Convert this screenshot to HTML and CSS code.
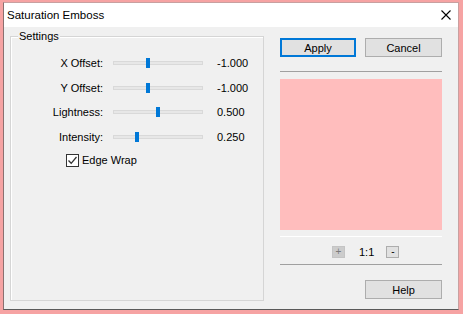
FILE: index.html
```html
<!DOCTYPE html>
<html>
<head>
<meta charset="utf-8">
<link rel="stylesheet" href="styles.css">
</head>
<body>
<div class="window">
  <div class="titlebar">
    <span class="title">Saturation Emboss</span>
    <svg class="close" width="10" height="10" viewBox="0 0 10 10"><path d="M0.5 0.5L9.5 9.5M9.5 0.5L0.5 9.5" stroke="#000" stroke-width="1.1" fill="none"/></svg>
  </div>
  <div class="content">
    <div class="group">
      <span class="legend">Settings</span>
      <div class="rows">
        <span class="label">X Offset:</span>
        <div class="track"><span class="thumb" style="left:32px"></span></div>
        <span class="value">-1.000</span>

        <span class="label">Y Offset:</span>
        <div class="track"><span class="thumb" style="left:32px"></span></div>
        <span class="value">-1.000</span>

        <span class="label">Lightness:</span>
        <div class="track"><span class="thumb" style="left:42px"></span></div>
        <span class="value">0.500</span>

        <span class="label">Intensity:</span>
        <div class="track"><span class="thumb" style="left:21px"></span></div>
        <span class="value">0.250</span>
      </div>
      <div class="check">
        <span class="box"><svg width="11" height="11" viewBox="0 0 11 11"><path d="M1.5 5.5L4.2 8.3L9.5 2" stroke="#333" stroke-width="1.3" fill="none"/></svg></span>
        <span>Edge Wrap</span>
      </div>
    </div>
    <div class="side">
      <div class="btnrow">
        <div class="btn default">Apply</div>
        <div class="btn cancel">Cancel</div>
      </div>
      <div class="sep grey first"></div>
      <div class="preview"></div>
      <div class="sep white"></div>
      <div class="zoomrow">
        <div class="zbtn plus">+</div>
        <span class="ratio">1:1</span>
        <div class="zbtn minus">-</div>
      </div>
      <div class="sep grey second"></div>
      <div class="btn help">Help</div>
    </div>
  </div>
</div>
</body>
</html>
```

FILE: styles.css
```css
* { box-sizing: border-box; }
html, body { margin: 0; padding: 0; }
body {
  width: 463px;
  height: 314px;
  background: #f6a3a3;
  padding: 2px 0 0 3px;
  font-family: "Liberation Sans", Arial, sans-serif;
  font-size: 11px;
  color: #000;
  overflow: hidden;
}
.window {
  width: 456px;
  height: 308px;
  background: #f0f0f0;
  border: 1px solid #c8a0a0;
  border-bottom-color: #5a5a5a;
  border-left-color: #8a7070;
  display: flex;
  flex-direction: column;
}
.titlebar {
  height: 24px;
  background: #fff;
  display: flex;
  align-items: center;
  justify-content: space-between;
  padding: 0 7px 0 3px;
}
.title { font-size: 11.5px; }
.close { display: block; }
.content {
  display: flex;
  padding: 9px 0 0 6px;
}
.group {
  position: relative;
  width: 254px;
  height: 265px;
  border: 1px solid #d5d5d5;
  box-shadow: inset 1px 1px 0 #fff;
}
.legend {
  position: absolute;
  left: 7px;
  top: -8px;
  padding: 0 1px;
  background: #f0f0f0;
  line-height: 14px;
}
.rows {
  display: grid;
  grid-template-columns: 92px 100px auto;
  grid-template-rows: 24px 25px 24px 25px;
  align-items: center;
  padding-top: 14px;
}
.label { text-align: right; }
.track {
  position: relative;
  margin-left: 10px;
  height: 4px;
  background: #e7e7e7;
  border: 1px solid #d9d9d9;
}
.thumb {
  position: absolute;
  top: -4px;
  width: 4px;
  height: 10px;
  background: #0078d7;
}
.value { margin-left: 14px; }
.check {
  display: flex;
  align-items: center;
  height: 22px;
  margin-left: 55px;
}
.box {
  width: 13px;
  height: 13px;
  border: 1px solid #333;
  background: #fff;
  display: flex;
  align-items: center;
  justify-content: center;
  margin-right: 3px;
}
.box svg { display: block; }
.side {
  margin-left: 16px;
  width: 162px;
  display: flex;
  flex-direction: column;
  padding-top: 2px;
}
.btnrow { display: flex; gap: 9px; }
.btn {
  height: 19px;
  background: #e1e1e1;
  border: 1px solid #adadad;
  display: flex;
  align-items: center;
  justify-content: center;
}
.btn.default { width: 76px; border: 2px solid #0078d7; }
.btn.cancel { width: 77px; }
.btn.help { width: 77px; margin-left: auto; margin-top: 15px; }
.sep { height: 1px; }
.sep.grey { background: #a0a0a0; }
.sep.white { background: #fff; margin-top: 6px; }
.sep.first { margin-top: 14px; }
.sep.second { margin-top: 6px; }
.preview {
  margin-top: 7px;
  height: 151px;
  background: #ffbdbd;
}
.zoomrow {
  display: flex;
  align-items: center;
  margin-top: 9px;
  margin-left: 52px;
  height: 12px;
}
.zbtn {
  width: 13px;
  height: 12px;
  display: flex;
  align-items: center;
  justify-content: center;
  font-size: 10px;
  line-height: 1;
}
.zbtn.plus { background: #cccccc; border: 1px solid #c4c4c4; color: #7a7a7a; }
.zbtn.minus { background: #e1e1e1; border: 1px solid #adadad; }
.ratio { margin-left: 14px; margin-right: 12px; }
```
